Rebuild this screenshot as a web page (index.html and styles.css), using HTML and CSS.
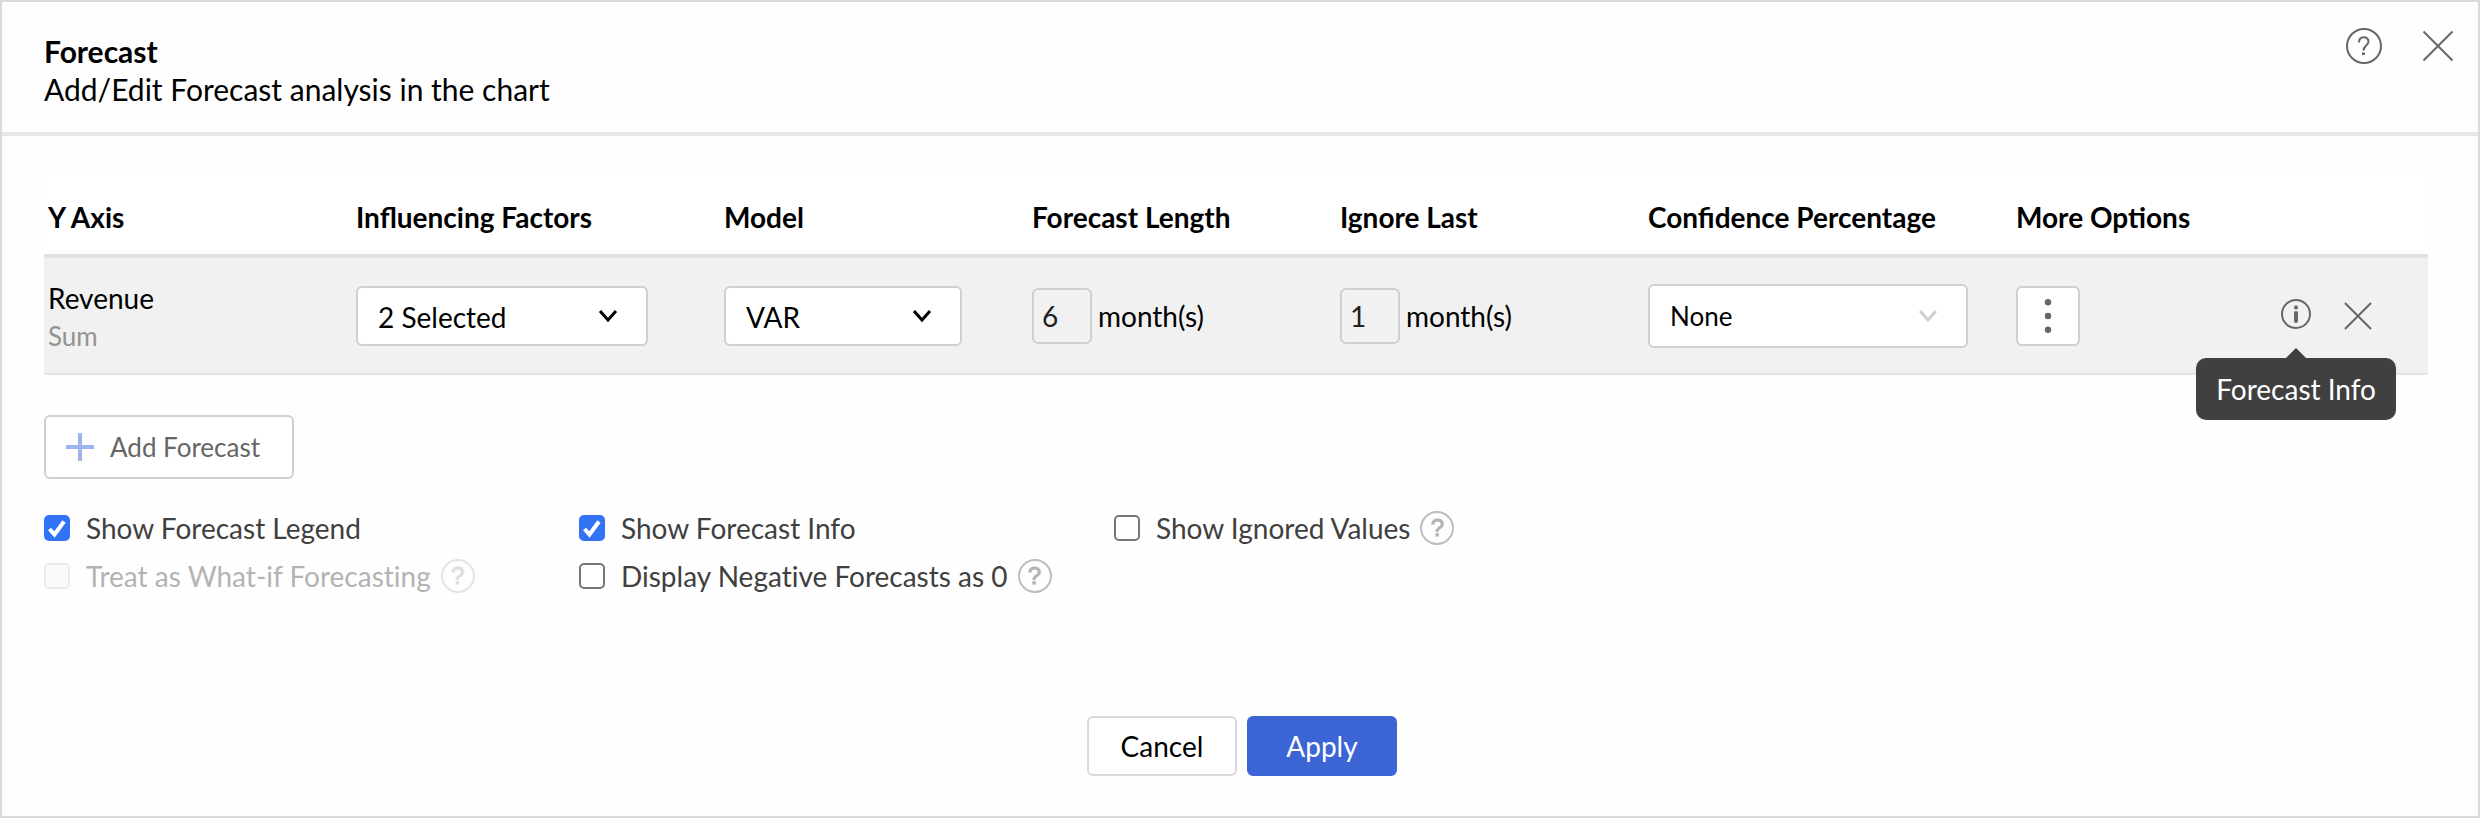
FILE: index.html
```html
<!doctype html>
<html lang="en">
<head>
<meta charset="utf-8">
<meta name="viewport" content="width=device-width, initial-scale=1">
<title>Forecast</title>
<link rel="stylesheet" href="styles.css">
</head>

<body>
<div class="dialog">
	<header class="head">
		<div class="heading">
			<h1>Forecast</h1>
			<p>Add/Edit Forecast analysis in the chart</p>
		</div>
		<div class="tools">
			<button type="button" class="icon" aria-label="Help">
				<svg width="36" height="36" viewBox="0 0 36 36"><circle cx="18" cy="18" r="17"/><path d="M13 14.500c0-7 9.500-6.500 9.500-1 0 4-5 4.300-5 9"/><path d="M17.500 24.500v2.500" class="thick"/></svg>
			</button>
			<button type="button" class="icon" aria-label="Close">
				<svg width="32" height="32" viewBox="0 0 32 32"><path d="M1.500 1.500l29 29M30.500 1.500l-29 29"/></svg>
			</button>
		</div>
	</header>

	<main class="body">
		<table class="grid">
			<colgroup>
				<col class="narrow"><col class="wide"><col class="narrow"><col class="narrow"><col class="narrow"><col class="wide"><col class="narrow"><col>
			</colgroup>
			<thead>
				<tr>
					<th>Y Axis</th>
					<th>Influencing Factors</th>
					<th>Model</th>
					<th>Forecast Length</th>
					<th>Ignore Last</th>
					<th>Confidence Percentage</th>
					<th>More Options</th>
					<td></td>
				</tr>
			</thead>
			<tbody>
				<tr>
					<td><div class="axis">Revenue</div><div class="func">Sum</div></td>
					<td><select class="factors" aria-label="Influencing Factors"><option>2 Selected</option></select></td>
					<td><select class="model" aria-label="Model"><option>VAR</option></select></td>
					<td><label class="months"><input type="text" value="6">month(s)</label></td>
					<td><label class="months"><input type="text" value="1">month(s)</label></td>
					<td><select class="confidence" aria-label="Confidence Percentage"><option>None</option></select></td>
					<td>
						<button type="button" class="more" aria-label="More Options">
							<svg width="8" height="42" viewBox="0 0 8 42"><circle cx="4" cy="4" r="4"/><circle cx="4" cy="21" r="4"/><circle cx="4" cy="38" r="4"/></svg>
						</button>
					</td>
					<td>
						<div class="actions">
							<div class="info">
								<button type="button" class="icon" aria-label="Forecast Info" aria-describedby="tip">
									<svg width="32" height="32" viewBox="0 0 32 32"><circle cx="16" cy="16" r="14"/><circle cx="16" cy="9.500" r="2" class="dot"/><path d="M16 15v8" class="stem"/></svg>
								</button>
								<div class="tip" id="tip" role="tooltip">Forecast Info</div>
							</div>
							<button type="button" class="icon remove" aria-label="Remove">
								<svg width="28" height="28" viewBox="0 0 28 28"><path d="M1 1l26 26M27 1l-26 26"/></svg>
							</button>
						</div>
					</td>
				</tr>
			</tbody>
		</table>

		<button type="button" class="add">
			<svg width="28" height="28" viewBox="0 0 28 28"><path d="M14 0v28M0 14h28"/></svg>
			Add Forecast
		</button>

		<div class="options">
			<div class="option">
				<input type="checkbox" id="legend" checked>
				<label for="legend">Show Forecast Legend</label>
			</div>
			<div class="option">
				<input type="checkbox" id="showinfo" checked>
				<label for="showinfo">Show Forecast Info</label>
			</div>
			<div class="option">
				<input type="checkbox" id="ignored">
				<label for="ignored">Show Ignored Values</label>
				<button type="button" class="hint" aria-label="About ignored values">?</button>
			</div>
			<div class="option off">
				<input type="checkbox" id="whatif" disabled>
				<label for="whatif">Treat as What-if Forecasting</label>
				<button type="button" class="hint" aria-label="About what-if forecasting" disabled>?</button>
			</div>
			<div class="option">
				<input type="checkbox" id="negative">
				<label for="negative">Display Negative Forecasts as 0</label>
				<button type="button" class="hint" aria-label="About negative forecasts">?</button>
			</div>
		</div>
	</main>

	<footer class="foot">
		<button type="button" class="btn">Cancel</button>
		<button type="button" class="btn primary">Apply</button>
	</footer>
</div>
</body>
</html>
```
FILE: styles.css
```css
* {
	box-sizing: border-box;
}
body {
	margin: 0;
	font-family: Lato, "Liberation Sans", sans-serif;
	font-size: 28px;
	line-height: 38px;
	color: #000;
	background: #fefefe;
}
button, input, select {
	font: inherit;
	color: inherit;
	margin: 0;
}
button {
	padding: 0;
	cursor: pointer;
}
.dialog {
	display: flex;
	flex-direction: column;
	min-height: 100vh;
	border: 2px solid #d9d9d9;
}

/* header */
.head {
	display: flex;
	justify-content: space-between;
	align-items: flex-start;
	padding: 30px 24px 24px 42px;
	border-bottom: 4px solid #e7e7e7;
}
.head h1 {
	margin: 0;
	font-size: 30px;
	line-height: 38px;
}
.head p {
	margin: 0;
	font-size: 30px;
}
.tools {
	display: flex;
	align-items: center;
	gap: 40px;
	margin-top: -4px;
}
.icon {
	display: block;
	border: 0;
	background: none;
}
.icon svg {
	display: block;
	fill: none;
	stroke: #666;
	stroke-width: 2;
}
.icon .thick {
	stroke-width: 3;
}
.icon .dot {
	fill: #666;
	stroke: none;
}
.icon .stem {
	stroke-width: 4;
	stroke-linecap: round;
}

/* forecast table */
.body {
	padding: 40px 50px 0 42px;
}
.grid {
	width: 100%;
	table-layout: fixed;
	border-collapse: separate;
	border-spacing: 0;
}
.narrow {
	width: 308px;
}
.wide {
	width: 368px;
}
.grid th, .grid td {
	padding: 0 4px;
	text-align: left;
	white-space: nowrap;
}
.grid thead th, .grid thead td {
	height: 82px;
	padding-top: 4px;
	border-bottom: 4px solid #e3e3e3;
	background: #fff;
}
.grid tbody td {
	height: 117px;
	background: #f1f1f1;
	border-bottom: 2px solid #e3e3e3;
}
.axis {
	padding-top: 2px;
}
.func {
	font-size: 26px;
	color: #939393;
}
select {
	display: block;
	height: 60px;
	padding: 2px 20px 0;
	border: 2px solid #d0d0d0;
	border-radius: 6px;
	appearance: none;
	background: #fff url("data:image/svg+xml,%3Csvg xmlns='http://www.w3.org/2000/svg' width='20' height='14'%3E%3Cpath d='M2 2l8 9 8-9' fill='none' stroke='%23000' stroke-width='3'/%3E%3C/svg%3E") no-repeat right 28px center;
}
.factors {
	width: 292px;
}
.model {
	width: 238px;
}
.confidence {
	width: 320px;
	height: 64px;
	padding-top: 0;
	font-size: 26px;
	background-image: url("data:image/svg+xml,%3Csvg xmlns='http://www.w3.org/2000/svg' width='20' height='14'%3E%3Cpath d='M2 2l8 9 8-9' fill='none' stroke='%23d0d0d0' stroke-width='3'/%3E%3C/svg%3E");
}
.months {
	display: flex;
	align-items: center;
	gap: 6px;
}
.months input {
	width: 60px;
	height: 56px;
	padding: 0 8px;
	border: 2px solid #d0d0d0;
	border-radius: 6px;
	background: none;
	color: #222;
}
.more {
	display: flex;
	align-items: center;
	justify-content: center;
	width: 64px;
	height: 60px;
	border: 2px solid #d0d0d0;
	border-radius: 6px;
	background: #fff;
}
.more svg {
	height: 34px;
	fill: #666;
}
.actions {
	display: flex;
	justify-content: flex-end;
	align-items: flex-end;
	gap: 32px;
	padding: 0 52px 4px 0;
}
.info {
	position: relative;
}
.tip {
	position: absolute;
	top: 60px;
	right: -84px;
	padding: 12px 20px;
	border-radius: 10px;
	background: #404040;
	color: #fff;
}
.tip::before {
	content: "";
	position: absolute;
	top: -10px;
	right: 90px;
	border: 10px solid transparent;
	border-top: 0;
	border-bottom-color: #404040;
}

/* below the table */
.add {
	display: flex;
	align-items: center;
	gap: 16px;
	width: 250px;
	height: 64px;
	margin: 40px 0 30px;
	padding: 0 20px;
	border: 2px solid #d0d0d0;
	border-radius: 6px;
	background: #fff;
	font-size: 26px;
	color: #666;
}
.add svg {
	stroke: #9fb3ee;
	stroke-width: 4;
}
.options {
	display: grid;
	grid-template-columns: repeat(3, 535px);
	row-gap: 10px;
	font-variant-ligatures: none;
}
.option {
	display: flex;
	align-items: center;
	color: #404040;
}
.option input {
	width: 26px;
	height: 26px;
	margin-right: 16px;
	appearance: none;
	border: 2px solid #767676;
	border-radius: 5px;
	background: #fff;
}
.option input:checked {
	border-color: #3273f6;
	background: #3273f6 url("data:image/svg+xml,%3Csvg xmlns='http://www.w3.org/2000/svg' width='22' height='22'%3E%3Cpath d='M3.500 12l5 5.500L18 4.500' fill='none' stroke='%23fff' stroke-width='4'/%3E%3C/svg%3E") no-repeat center;
}
.option input:disabled {
	border-color: #ebebeb;
	background: #fafafa;
}
.hint {
	width: 34px;
	height: 34px;
	margin-left: 10px;
	border: 2px solid #bdbdbd;
	border-radius: 50%;
	background: none;
	font-family: "Liberation Sans", sans-serif;
	font-size: 24px;
	line-height: 30px;
	color: #b5b5b5;
	-webkit-text-stroke: 1px #b5b5b5;
}
.off {
	color: #b3b3b3;
}
.off .hint {
	border-color: #e3e3e3;
	color: #dedede;
	-webkit-text-stroke-color: #dedede;
}

.foot {
	display: flex;
	justify-content: center;
	gap: 10px;
	margin-top: auto;
	padding: 0 0 40px 4px;
}
.btn {
	width: 150px;
	height: 60px;
	border: 2px solid #d9d9d9;
	border-radius: 6px;
	background: #fff;
}
.primary {
	border-color: #3b65d5;
	background: #3b65d5;
	color: #fff;
}
```
